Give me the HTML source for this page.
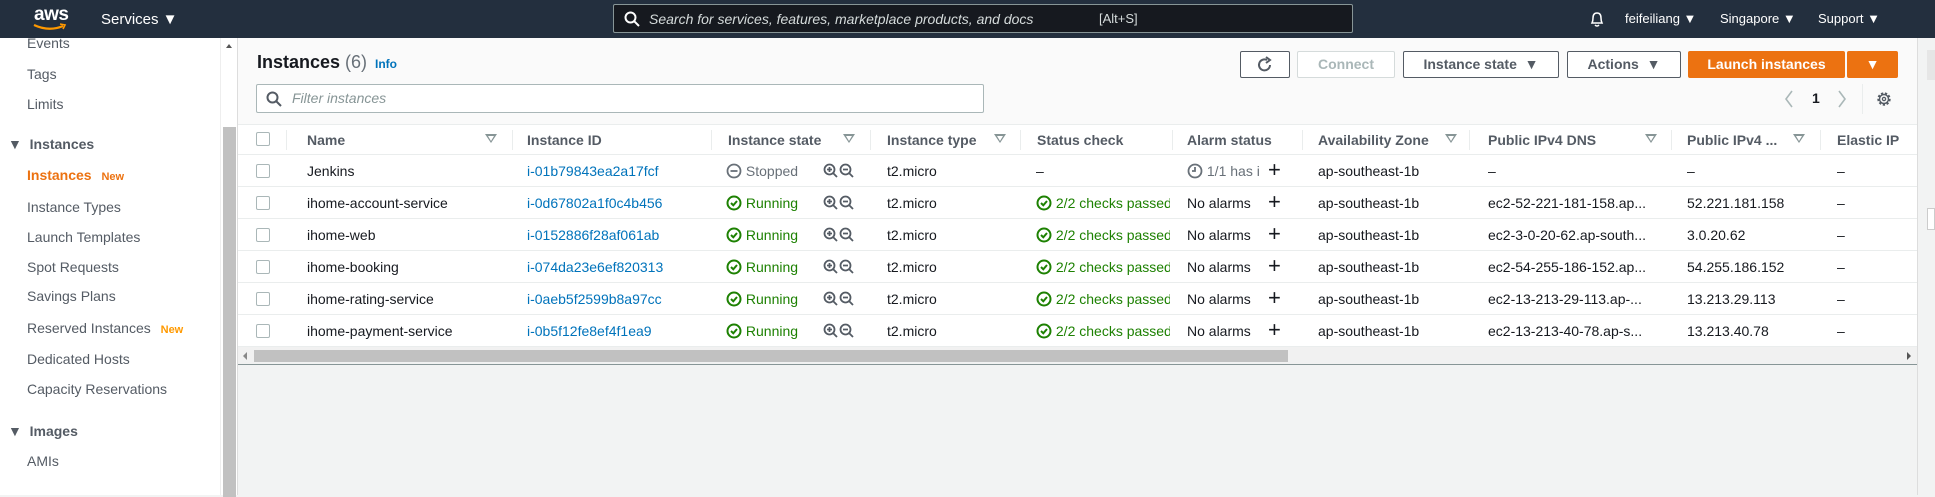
<!DOCTYPE html>
<html><head><meta charset="utf-8"><style>
*{box-sizing:border-box;margin:0;padding:0}
body{width:1935px;height:495px;overflow:hidden;background:#f2f3f3;font-family:"Liberation Sans",sans-serif;font-size:14px;color:#16191f;position:relative}
.abs{position:absolute;white-space:nowrap}
#nav{position:absolute;left:0;top:0;width:1935px;height:38px;background:#232f3e;color:#fff}
#side{position:absolute;left:0;top:38px;width:220px;height:457px;background:#fff}
.si{position:absolute;left:27px;color:#545b64;font-size:14px}
#sb{position:absolute;left:220px;top:38px;width:17px;height:457px;background:#fff;border-left:1px solid #eee}
#main{position:absolute;left:237px;top:38px;width:1680px;height:457px;background:#f2f3f3;border-left:1px solid #ddd}
.btn{position:absolute;top:51px;height:27px;border:1px solid #545b64;border-radius:2px;background:#fff;font-weight:bold;color:#545b64;font-size:14px;text-align:center;line-height:25px}
.th{position:absolute;font-weight:bold;color:#545b64;top:132px}
.sep{position:absolute;top:130px;width:1px;height:20px;background:#eaeded}
.fi{position:absolute;top:134px;width:0;height:0;border-left:6px solid transparent;border-right:6px solid transparent;border-top:9px solid #879596}
.fi:after{content:"";position:absolute;left:-3px;top:-7px;border-left:3px solid transparent;border-right:3px solid transparent;border-top:5px solid #fff}
.row{position:absolute;left:238px;width:1679px;height:32px;background:#fff;border-bottom:1px solid #eaeded}
.c{position:absolute;top:8px;white-space:nowrap}
.cb{position:absolute;left:18px;top:9px;width:14px;height:14px;border:1px solid #aab7b8;border-radius:2px;background:#fff}
.link{color:#0073bb}
.grn{color:#1d8102}
</style></head><body>
<div id="nav">
 <div class="abs" style="left:34px;top:4px;font-size:19px;font-weight:bold;letter-spacing:-0.5px">aws</div>
 <svg class="abs" style="left:33px;top:23px" width="34" height="9"><path d="M1 2 Q16 9 30 3" stroke="#ff9900" stroke-width="2.2" fill="none"/><path d="M27 1 L32 2 L30 6" stroke="#ff9900" stroke-width="1.6" fill="none"/></svg>
 <div class="abs" style="left:101px;top:11px;font-size:15px">Services ▼</div>
 <div class="abs" style="left:613px;top:4px;width:740px;height:29px;border:1px solid #879596;border-radius:2px;background:#16191f"></div>
 <svg class="abs" style="left:624px;top:11px" width="16" height="16"><circle cx="6.5" cy="6.5" r="5" stroke="#fff" stroke-width="2" fill="none"/><path d="M10 10 L15 15" stroke="#fff" stroke-width="2"/></svg>
 <div class="abs" style="left:649px;top:11px;font-size:14px;font-style:italic;color:#d5dbdb">Search for services, features, marketplace products, and docs</div>
 <div class="abs" style="left:1099px;top:11px;font-size:13px;color:#d5dbdb">[Alt+S]</div>
 <svg class="abs" style="left:1589px;top:10px" width="16" height="18"><path d="M3 13 Q4 11 4 8 Q4 3 8 3 Q12 3 12 8 Q12 11 13 13 Z M6 15 Q8 17 10 15" stroke="#fff" stroke-width="1.5" fill="none"/></svg>
 <div class="abs" style="left:1625px;top:11px;font-size:13px">feifeiliang ▼</div>
 <div class="abs" style="left:1720px;top:11px;font-size:13px">Singapore ▼</div>
 <div class="abs" style="left:1818px;top:11px;font-size:13px">Support ▼</div>
</div>
<div id="side">
 <div class="si" style="top:-3px">Events</div>
 <div class="si" style="top:28px">Tags</div>
 <div class="si" style="top:58px">Limits</div>
 <div class="si" style="left:8px;top:98px;font-weight:bold;color:#545b64">▼ &nbsp;Instances</div>
 <div class="si" style="top:129px;color:#ec7211;font-weight:bold">Instances <span style="font-size:11px;margin-left:6px">New</span></div>
 <div class="si" style="top:161px">Instance Types</div>
 <div class="si" style="top:191px">Launch Templates</div>
 <div class="si" style="top:221px">Spot Requests</div>
 <div class="si" style="top:250px">Savings Plans</div>
 <div class="si" style="top:282px">Reserved Instances <span style="font-size:11px;margin-left:6px;color:#ff9900;font-weight:bold">New</span></div>
 <div class="si" style="top:313px">Dedicated Hosts</div>
 <div class="si" style="top:343px">Capacity Reservations</div>
 <div class="si" style="left:8px;top:385px;font-weight:bold;color:#545b64">▼ &nbsp;Images</div>
 <div class="si" style="top:415px">AMIs</div>
</div>
<div id="sb"><div style="position:absolute;left:5px;top:6px;border-left:3px solid transparent;border-right:3px solid transparent;border-bottom:4px solid #555"></div><div style="position:absolute;left:2px;top:89px;width:13px;height:370px;background:#c1c1c1"></div></div>
<div id="main"></div>
<div class="abs" style="left:238px;top:38px;width:1679px;height:87px;background:#fafafa"></div>
<div class="abs" style="left:257px;top:52px;font-size:18px;font-weight:bold">Instances <span style="font-weight:normal;color:#687078">(6)</span></div>
<div class="abs" style="left:375px;top:57px;font-size:12px;font-weight:bold;color:#0073bb">Info</div>
<div class="abs" style="left:256px;top:84px;width:728px;height:29px;border:1px solid #aab7b8;border-radius:2px;background:#fff"></div>
<svg class="abs" style="left:266px;top:91px" width="16" height="16"><circle cx="6.5" cy="6.5" r="5" stroke="#545b64" stroke-width="2" fill="none"/><path d="M10 10 L15 15" stroke="#545b64" stroke-width="2"/></svg>
<div class="abs" style="left:292px;top:90px;font-style:italic;color:#879596">Filter instances</div>
<div class="btn" style="left:1240px;width:50px"><svg width="18" height="18" style="margin-top:4px"><path d="M14 9 A5.5 5.5 0 1 1 11 4" stroke="#545b64" stroke-width="2" fill="none"/><path d="M10 1 L14 4 L10 7" stroke="#545b64" stroke-width="2" fill="none"/></svg></div>
<div class="btn" style="left:1297px;width:98px;border-color:#d5dbdb;color:#aab7b8">Connect</div>
<div class="btn" style="left:1403px;width:156px">Instance state &nbsp;▼</div>
<div class="btn" style="left:1567px;width:114px">Actions &nbsp;▼</div>
<div class="btn" style="left:1688px;width:157px;background:#ec7211;border-color:#ec7211;color:#fff">Launch instances</div>
<div class="btn" style="left:1847px;width:51px;background:#ec7211;border-color:#ec7211;color:#fff">▼</div>
<svg class="abs" style="left:1783px;top:89px" width="12" height="20"><path d="M9 2 L3 10 L9 18" stroke="#aab7b8" stroke-width="1.6" fill="none"/></svg>
<div class="abs" style="left:1812px;top:90px;font-weight:bold">1</div>
<svg class="abs" style="left:1836px;top:89px" width="12" height="20"><path d="M3 2 L9 10 L3 18" stroke="#aab7b8" stroke-width="1.6" fill="none"/></svg>
<div class="abs" style="left:1862px;top:84px;width:1px;height:30px;background:#eaeded"></div>
<svg class="abs" style="left:1875px;top:90px" width="18" height="18"><circle cx="9" cy="9" r="5.5" stroke="#545b64" stroke-width="2.4" fill="none" stroke-dasharray="2.2 1.6"/><circle cx="9" cy="9" r="4.5" stroke="#545b64" stroke-width="1.4" fill="none"/><circle cx="9" cy="9" r="1.6" stroke="#545b64" stroke-width="1.3" fill="none"/></svg>
<div class="abs" style="left:238px;top:124px;width:1679px;height:31px;background:#fff;border-top:1px solid #eaeded;border-bottom:1px solid #eaeded"></div>
<div class="cb" style="left:256px;top:132px"></div>
<div class="sep" style="left:286px"></div>
<div class="th" style="left:307px">Name</div><div class="fi" style="left:485px"></div><div class="sep" style="left:512px"></div>
<div class="th" style="left:527px">Instance ID</div><div class="sep" style="left:711px"></div>
<div class="th" style="left:728px">Instance state</div><div class="fi" style="left:843px"></div><div class="sep" style="left:870px"></div>
<div class="th" style="left:887px">Instance type</div><div class="fi" style="left:994px"></div><div class="sep" style="left:1020px"></div>
<div class="th" style="left:1037px">Status check</div><div class="sep" style="left:1172px"></div>
<div class="th" style="left:1187px">Alarm status</div><div class="sep" style="left:1302px"></div>
<div class="th" style="left:1318px">Availability Zone</div><div class="fi" style="left:1445px"></div><div class="sep" style="left:1469px"></div>
<div class="th" style="left:1488px">Public IPv4 DNS</div><div class="fi" style="left:1645px"></div><div class="sep" style="left:1671px"></div>
<div class="th" style="left:1687px">Public IPv4 ...</div><div class="fi" style="left:1793px"></div><div class="sep" style="left:1820px"></div>
<div class="th" style="left:1837px">Elastic IP</div>

<div id="rows"></div>
<div class="abs" style="left:238px;top:347px;width:1679px;height:18px;background:#f1f1f1;border-bottom:1px solid #879596"></div>
<div class="abs" style="left:254px;top:350px;width:1034px;height:12px;background:#c1c1c1"></div>
<div class="abs" style="left:243px;top:352px;border-top:4px solid transparent;border-bottom:4px solid transparent;border-right:4px solid #888"></div>
<div class="abs" style="left:1907px;top:352px;border-top:4px solid transparent;border-bottom:4px solid transparent;border-left:4px solid #555"></div>
<div class="abs" style="left:1917px;top:38px;width:18px;height:457px;background:#f2f3f3;border-left:1px solid #ddd"></div>
<div class="abs" style="left:1927px;top:50px;width:8px;height:30px;background:#e6e6e6"></div>
<div class="abs" style="left:1927px;top:208px;width:8px;height:22px;border:1px solid #ccc;background:#fff"></div>

<script>
var d=[["Jenkins","i-01b79843ea2a17fcf",0,"–","ap-southeast-1b","–","–"],
["ihome-account-service","i-0d67802a1f0c4b456",1,"ec2-52-221-181-158.ap...","ap-southeast-1b","52.221.181.158"],
["ihome-web","i-0152886f28af061ab",1,"ec2-3-0-20-62.ap-south...","ap-southeast-1b","3.0.20.62"],
["ihome-booking","i-074da23e6ef820313",1,"ec2-54-255-186-152.ap...","ap-southeast-1b","54.255.186.152"],
["ihome-rating-service","i-0aeb5f2599b8a97cc",1,"ec2-13-213-29-113.ap-...","ap-southeast-1b","13.213.29.113"],
["ihome-payment-service","i-0b5f12fe8ef4f1ea9",1,"ec2-13-213-40-78.ap-s...","ap-southeast-1b","13.213.40.78"]];
var h="";
var ok='<svg width="16" height="16" style="vertical-align:-3px"><circle cx="8" cy="8" r="6.5" stroke="#1d8102" stroke-width="2" fill="none"/><path d="M5 8 L7.3 10.3 L11 6" stroke="#1d8102" stroke-width="2" fill="none"/></svg>';
var mg='<svg width="32" height="16" style="vertical-align:-3px"><circle cx="6.5" cy="6.5" r="5" stroke="#545b64" stroke-width="1.8" fill="none"/><path d="M10 10 L14 14 M4 6.5 H9 M6.5 4 V9" stroke="#545b64" stroke-width="1.8"/><circle cx="22.5" cy="6.5" r="5" stroke="#545b64" stroke-width="1.8" fill="none"/><path d="M26 10 L30 14 M20 6.5 H25" stroke="#545b64" stroke-width="1.8"/></svg>';
d.forEach(function(r,i){
 var t=155+i*32;
 var st=r[2]?'<span class="grn">'+ok+' Running</span>':'<span style="color:#687078"><svg width="16" height="16" style="vertical-align:-3px"><circle cx="8" cy="8" r="6.5" stroke="#687078" stroke-width="1.8" fill="none"/><path d="M4.5 8 H11.5" stroke="#687078" stroke-width="1.8"/></svg> Stopped</span>';
 var sc=r[2]?'<span class="grn">'+ok+' 2/2 checks passed</span>':'–';
 var al=r[2]?'No alarms':'<span style="color:#687078"><svg width="16" height="16" style="vertical-align:-3px"><circle cx="8" cy="8" r="6.5" stroke="#687078" stroke-width="1.8" fill="none"/><path d="M8 4 V8 H5" stroke="#687078" stroke-width="1.8" fill="none"/></svg> 1/1 has i</span>';
 h+='<div class="row" style="top:'+t+'px"><div class="cb"></div>'+
 '<div class="c" style="left:69px">'+r[0]+'</div>'+
 '<div class="c link" style="left:289px">'+r[1]+'</div>'+
 '<div class="c" style="left:488px">'+st+'</div>'+
 '<div class="c" style="left:585px;top:8px">'+mg+'</div>'+
 '<div class="c" style="left:649px">t2.micro</div>'+
 '<div class="c" style="left:798px;width:134px;overflow:hidden">'+sc+'</div>'+
 '<div class="c" style="left:949px;width:78px;overflow:hidden">'+al+'</div>'+
 '<div class="c" style="left:1030px;font-size:22px;top:2px">+</div>'+
 '<div class="c" style="left:1080px">'+r[4]+'</div>'+
 '<div class="c" style="left:1250px">'+r[3]+'</div>'+
 '<div class="c" style="left:1449px">'+r[5]+'</div>'+
 '<div class="c" style="left:1599px">–</div></div>';
});
document.getElementById("rows").innerHTML=h;
</script>
</body></html>
